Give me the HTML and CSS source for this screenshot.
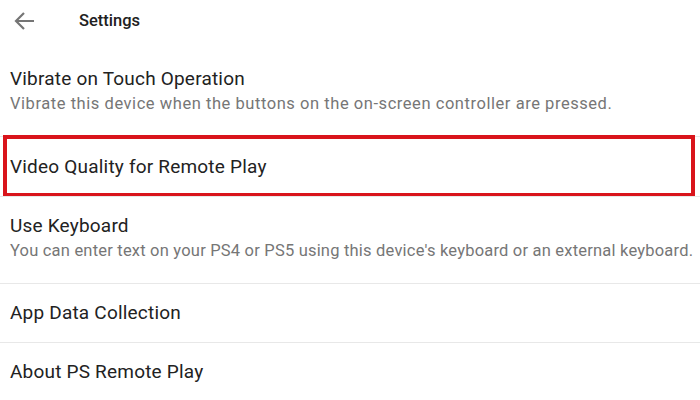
FILE: index.html
```html
<!DOCTYPE html>
<html>
<head>
<meta charset="utf-8">
<link rel="stylesheet" href="styles.css">
</head>
<body>
<div class="page">
  <header class="topbar">
    <span class="back">
      <svg width="22" height="20" viewBox="0 0 22 20"><path d="M21 10H3M11 2L3 10L11 18" fill="none" stroke="#757575" stroke-width="2.2" stroke-linecap="butt" stroke-linejoin="miter"/></svg>
    </span>
    <span class="title">Settings</span>
  </header>
  <ul class="list">
    <li class="item two">
      <div class="primary">Vibrate on Touch Operation</div>
      <div class="secondary">Vibrate this device when the buttons on the on-screen controller are pressed.</div>
    </li>
    <li class="item highlighted">
      <div class="primary">Video Quality for Remote Play</div>
    </li>
    <li class="item two">
      <div class="primary">Use Keyboard</div>
      <div class="secondary tight">You can enter text on your PS4 or PS5 using this device's keyboard or an external keyboard.</div>
    </li>
    <li class="item">
      <div class="primary">App Data Collection</div>
    </li>
    <li class="item">
      <div class="primary">About PS Remote Play</div>
    </li>
  </ul>
</div>
</body>
</html>
```
FILE: styles.css
```css
html, body {
  margin: 0;
  padding: 0;
  background: #ffffff;
}
body {
  font-family: Roboto, "Noto Sans", "Liberation Sans", sans-serif;
  color: #212121;
  width: 700px;
  height: 400px;
  overflow: hidden;
}
.topbar {
  height: 49px;
  display: flex;
  align-items: center;
  box-sizing: border-box;
  padding-bottom: 8px;
}
.back {
  width: 22px;
  height: 20px;
  margin-left: 13px;
  display: flex;
}
.title {
  margin-left: 44px;
  font-size: 16.5px;
  font-weight: 500;
  color: #212121;
}
.list {
  list-style: none;
  margin: 0;
  padding: 0;
}
.item {
  position: relative;
  padding: 17px 10px;
  border-top: 1px solid #e8e8e8;
}
.item:first-child {
  border-top: none;
  padding-top: 18px;
}
.item.two {
  padding-bottom: 19px;
}
.item.highlighted {
  padding-top: 18px;
}
.primary {
  font-size: 19px;
  line-height: 24px;
  letter-spacing: 0.2px;
  color: #222222;
}
.secondary {
  font-size: 16.5px;
  line-height: 26px;
  letter-spacing: 0.55px;
  color: #767676;
  white-space: nowrap;
}
.secondary.tight {
  letter-spacing: 0.2px;
}
.highlighted::after {
  content: "";
  position: absolute;
  top: -2px;
  left: 3px;
  right: 5px;
  bottom: -1px;
  border: 4px solid #d9141b;
}
```
